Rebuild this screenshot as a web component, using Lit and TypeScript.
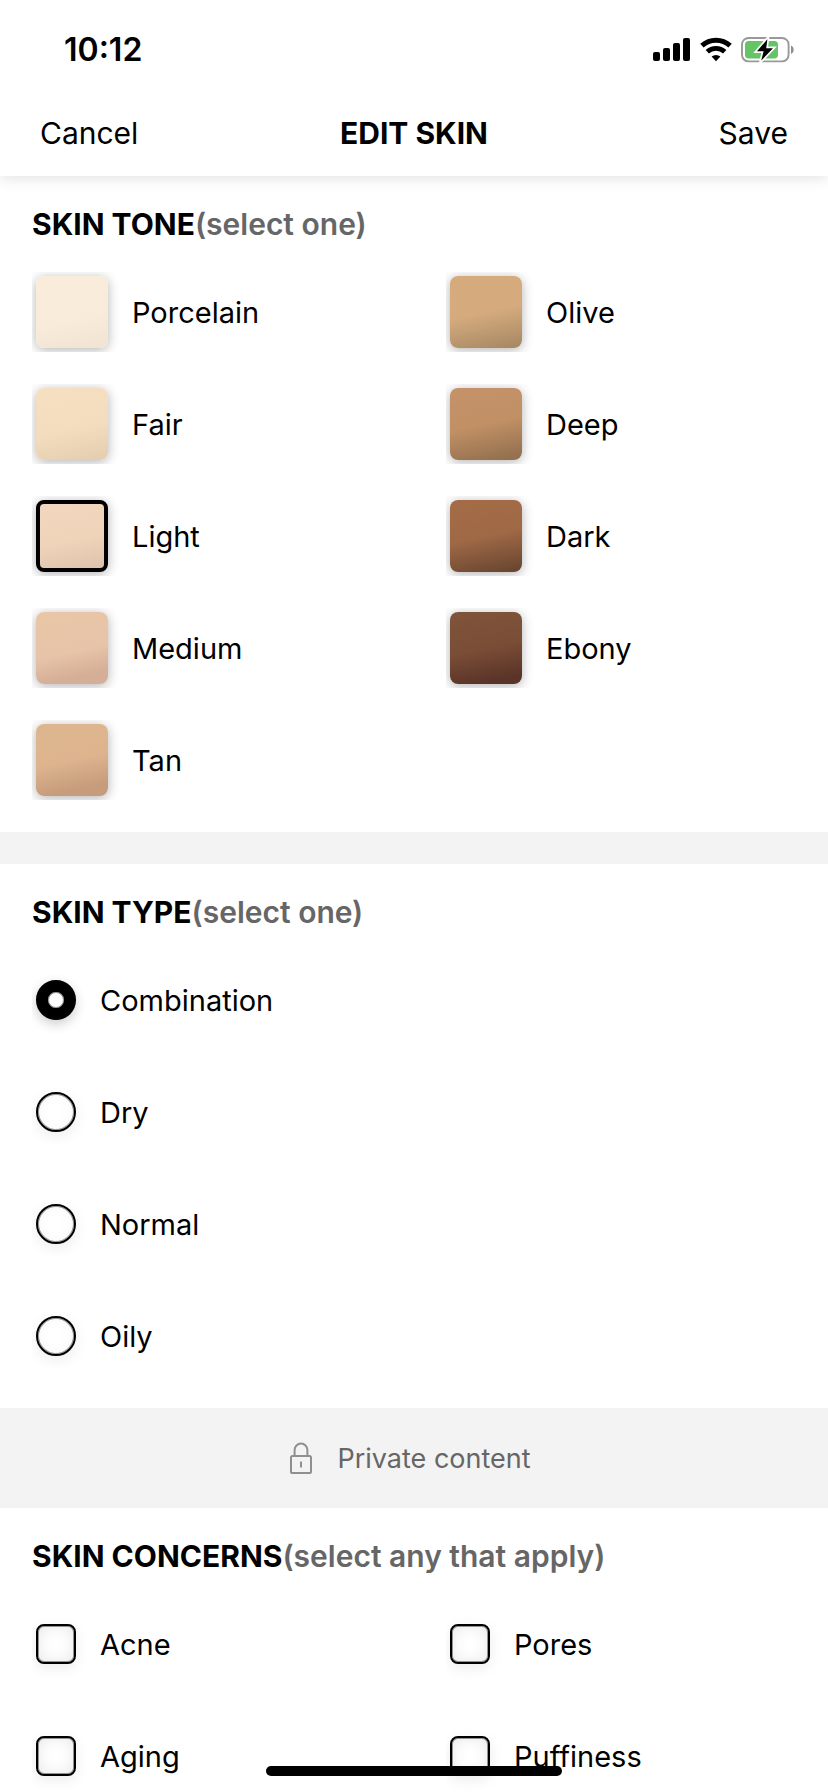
import { LitElement, html, css, svg } from "lit";
import { customElement, property, state } from "lit/decorators.js";
import { classMap } from "lit/directives/class-map.js";

const TONES = [
  "Porcelain", "Fair", "Light", "Medium", "Tan",
  "Olive", "Deep", "Dark", "Ebony",
];
const TYPES = ["Combination", "Dry", "Normal", "Oily"];
const CONCERNS = ["Acne", "Aging", "Pores", "Puffiness"];

@customElement("status-bar")
class StatusBar extends LitElement {
  static styles = css`
    :host {
      display: flex;
      align-items: center;
      justify-content: space-between;
      height: 88px;
      padding: 12px 33px 0 64px;
      box-sizing: border-box;
    }
    .time {
      font-size: 32px;
      font-weight: 600;
      line-height: 40px;
    }
    .icons {
      display: flex;
      align-items: center;
      gap: 8px;
    }
    svg {
      display: block;
    }
  `;

  render() {
    return html`
      <span class="time">10:12</span>
      <div class="icons">
        <svg width="40" height="26" viewBox="0 0 40 26" aria-label="Signal">
          ${[[2, 15, 9], [12, 11, 13], [22, 6, 18], [32, 1, 23]].map(
            ([x, y, h]) =>
              svg`<rect x=${x} y=${y} width="7" height=${h} rx="2"></rect>`
          )}
        </svg>
        <svg width="34" height="26" viewBox="0 0 34 26" aria-label="Wi-Fi">
          <g fill="none" stroke="#000">
            <path stroke-width="5" d="M2.9 8.7a21 21 0 0 1 28.2 0"></path>
            <path stroke-width="4.8" d="M8.3 14.8a12.8 12.8 0 0 1 17.4 0"></path>
          </g>
          <path d="M17 24.2l-4.4-4.6a6.6 6.6 0 0 1 8.8 0z"></path>
        </svg>
        <svg width="54" height="28" viewBox="0 0 54 28" aria-label="Battery charging">
          <rect x="1" y="2" width="46.6" height="23.4" rx="6.6" fill="#fff" stroke="#999" stroke-width="1.9"></rect>
          <path d="M50 9.4c3.6 1.6 3.6 7 0 8.6z" fill="#8f8f8f"></path>
          <rect x="4" y="5" width="33" height="17.4" rx="3.6" fill="#65c466"></rect>
          <path d="M26.4 3.2L16 15.2h6.6L20.2 24.6 32 12.2h-6.8z"
            stroke="#fff" stroke-width="3.4" fill="#000" paint-order="stroke"></path>
        </svg>
      </div>
    `;
  }
}

@customElement("option-row")
class OptionRow extends LitElement {
  @property() kind = "radio";
  @property() label = "";
  @property() group = "";
  @property({ type: Boolean }) checked = false;

  static styles = css`
    :host {
      display: block;
    }
    .row {
      display: flex;
      align-items: center;
      height: 112px;
      padding-left: 32px;
      box-sizing: border-box;
      font-size: 29px;
      line-height: 36px;
      cursor: pointer;
    }
    /* The frame cuts the control's shadow off near its left edge. */
    .frame {
      display: flex;
      padding: 16px 24px 16px 4px;
      overflow: hidden;
    }
    .frame.tight {
      padding: 4px 24px 4px 4px;
    }
    .name {
      padding-top: 2px;
    }
    input {
      appearance: none;
      box-sizing: border-box;
      width: 40px;
      height: 40px;
      margin: 0;
      border: 2px solid #000;
      background: #fff;
    }
    .radio {
      border-radius: 50%;
      box-shadow: 0 4px 14px rgba(0, 0, 0, 0.08),
        inset 0 0 0 1px rgba(0, 0, 0, 0.4), inset 0 0 14px rgba(0, 0, 0, 0.04);
    }
    .radio:checked {
      border-width: 12px;
      box-shadow: 0 4px 12px rgba(0, 0, 0, 0.2),
        inset 0 0 0 1px rgba(0, 0, 0, 0.4);
    }
    .box {
      border-radius: 8px;
      box-shadow: 0 4px 14px rgba(0, 0, 0, 0.08),
        inset 0 0 0 1px rgba(0, 0, 0, 0.4), inset 0 0 16px rgba(0, 0, 0, 0.1);
    }
    .swatch {
      width: 72px;
      height: 72px;
      border: 0;
      border-radius: 8px;
      box-shadow: 0 2px 12px rgba(0, 0, 0, 0.3);
    }
    .porcelain { background: linear-gradient(168deg, #f9ecd9, #f8ebda 60%, #f0e3d2); }
    .fair { background: linear-gradient(168deg, #f5dfbf, #f4ddbf 55%, #e4ccaf); }
    .light { background: linear-gradient(168deg, #f2d6bd, #efd4ba 55%, #dcbfa9); }
    .medium { background: linear-gradient(168deg, #e9c6a7, #e7c3a8 55%, #d4ae97 85%); }
    .tan { background: linear-gradient(168deg, #deb68e, #ddb48e 50%, #c69c7c 85%); }
    .olive { background: linear-gradient(168deg, #d6aa7c, #d5ab7e 50%, #a98a65 95%); }
    .deep { background: linear-gradient(168deg, #c59269, #c19065 50%, #93704f 95%); }
    .dark { background: linear-gradient(168deg, #a56b47, #9f6946 50%, #6b4731 95%); }
    .ebony { background: linear-gradient(168deg, #80543b, #7a4d36 50%, #5a3428 90%); }
    .swatch:checked {
      border: 4px solid #000;
      background-origin: border-box;
    }
  `;

  render() {
    const classes = {
      [this.kind]: true,
      [this.label.toLowerCase()]: this.kind === "swatch",
    };
    return html`
      <label class="row">
        <span class=${classMap({ frame: true, tight: this.kind === "swatch" })}>
          <input
            class=${classMap(classes)}
            type=${this.kind === "box" ? "checkbox" : "radio"}
            name=${this.group}
            .checked=${this.checked}
            @change=${this.pick}
          />
        </span>
        <span class="name">${this.label}</span>
      </label>
    `;
  }

  private pick() {
    this.dispatchEvent(new CustomEvent("pick", { detail: this.label }));
  }
}

@customElement("app-root")
class AppRoot extends LitElement {
  @state() tone = "Light";
  @state() type = "Combination";
  @state() concerns: string[] = [];

  static styles = css`
    :host {
      display: flex;
      flex-direction: column;
      height: 100vh;
      overflow: hidden;
      background: #fff;
      color: #000;
      font-family: Inter, "Liberation Sans", sans-serif;
    }
    header {
      position: relative;
      z-index: 1;
      flex: none;
      background: #fff;
      box-shadow: 0 2px 14px rgba(0, 0, 0, 0.12);
    }
    nav {
      display: grid;
      grid-template-columns: 1fr auto 1fr;
      align-items: center;
      height: 88px;
      box-sizing: border-box;
      padding: 2px 40px 0;
    }
    nav button {
      justify-self: start;
      padding: 0;
      border: 0;
      background: none;
      color: inherit;
      font: inherit;
      font-size: 30px;
      line-height: 40px;
      cursor: pointer;
    }
    nav button:last-child {
      justify-self: end;
    }
    h1,
    h2 {
      margin: 0;
      font-size: 30px;
      font-weight: 700;
      line-height: 36px;
    }
    h2 {
      padding: 30px 32px 14px;
    }
    .hint {
      color: #666;
      font-weight: 600;
    }
    main {
      flex: 1;
      min-height: 0;
      overflow-y: auto;
      scrollbar-width: none;
    }
    section {
      padding-bottom: 16px;
    }
    .columns {
      display: grid;
      grid-template-columns: 1fr 1fr;
      align-items: start;
    }
    .divider {
      height: 32px;
      background: #f3f3f3;
    }
    .private {
      display: flex;
      align-items: center;
      justify-content: center;
      gap: 24px;
      height: 100px;
      padding-right: 8px;
      background: #f3f3f3;
      color: #666;
      font-size: 27px;
      line-height: 36px;
    }
    .private span {
      padding-top: 2px;
    }
    .home {
      position: absolute;
      z-index: 2;
      left: 50%;
      bottom: 16px;
      width: 296px;
      height: 10px;
      margin-left: -148px;
      border-radius: 5px;
      background: #000;
    }
  `;

  render() {
    return html`
      <header>
        <status-bar></status-bar>
        <nav>
          <button type="button">Cancel</button>
          <h1>EDIT SKIN</h1>
          <button type="button">Save</button>
        </nav>
      </header>
      <main>
        <section>
          <h2>SKIN TONE<span class="hint">(select one)</span></h2>
          <div class="columns">
            ${[TONES.slice(0, 5), TONES.slice(5)].map(
              (column) => html`<div>
                ${column.map(
                  (name) => html`<option-row
                    kind="swatch"
                    group="tone"
                    .label=${name}
                    .checked=${this.tone === name}
                    @pick=${() => (this.tone = name)}
                  ></option-row>`
                )}
              </div>`
            )}
          </div>
        </section>
        <div class="divider"></div>
        <section>
          <h2>SKIN TYPE<span class="hint">(select one)</span></h2>
          ${TYPES.map(
            (name) => html`<option-row
              kind="radio"
              group="type"
              .label=${name}
              .checked=${this.type === name}
              @pick=${() => (this.type = name)}
            ></option-row>`
          )}
        </section>
        <div class="private">
          <svg width="24" height="34" viewBox="0 0 24 34" fill="none" stroke="#8f8f8f" stroke-width="2" aria-hidden="true">
            <rect x="2" y="15" width="20" height="17" rx="1.6"></rect>
            <path d="M5.6 15V9a6.4 6.4 0 0 1 12.8 0v6M12 20.6v6"></path>
          </svg>
          <span>Private content</span>
        </div>
        <section>
          <h2>SKIN CONCERNS<span class="hint">(select any that apply)</span></h2>
          <div class="columns">
            ${[CONCERNS.slice(0, 2), CONCERNS.slice(2)].map(
              (column) => html`<div>
                ${column.map(
                  (name) => html`<option-row
                    kind="box"
                    group="concern"
                    .label=${name}
                    .checked=${this.concerns.includes(name)}
                    @pick=${() => this.toggle(name)}
                  ></option-row>`
                )}
              </div>`
            )}
          </div>
        </section>
      </main>
      <div class="home"></div>
    `;
  }

  private toggle(name: string) {
    this.concerns = this.concerns.includes(name)
      ? this.concerns.filter((item) => item !== name)
      : [...this.concerns, name];
  }
}
